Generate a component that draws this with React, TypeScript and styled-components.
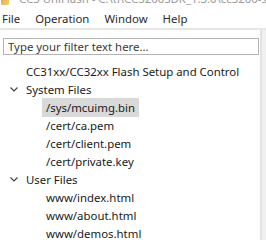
import React from "react";
import styled, { createGlobalStyle } from "styled-components";

const GlobalStyle = createGlobalStyle`
  html, body {
    margin: 0;
    padding: 0;
    background: #ffffff;
  }
  body {
    font-family: "Noto Sans", "Open Sans", sans-serif;
    font-size: 11.4px;
    color: #1a1a1a;
  }
`;

const Window = styled.div`
  width: 266px;
  height: 240px;
  overflow: hidden;
  display: flex;
  flex-direction: column;
  background: #ffffff;
`;

const TitleBar = styled.div`
  height: 5px;
  display: flex;
  align-items: flex-end;
  gap: 10px;
  padding-left: 1px;
  overflow: hidden;
  flex-shrink: 0;
`;

const TitleIcon = styled.div`
  width: 8px;
  height: 9px;
  flex-shrink: 0;
  background: linear-gradient(135deg, #e8a33a, #f3d27a);
  border-radius: 1px;
`;

const TitleText = styled.span`
  line-height: 12px;
  color: #9a9a9a;
  white-space: nowrap;
`;

const MenuBar = styled.div`
  height: 23px;
  box-sizing: border-box;
  padding: 3px 0 0 2px;
  display: flex;
  align-items: center;
  flex-shrink: 0;
`;

const MenuItem = styled.span`
  margin-right: 15px;
  color: #2b2b2b;
  white-space: nowrap;
`;

const Body = styled.div`
  flex: 1;
  display: flex;
  border-top: 2px solid #e6e6e6;
  min-height: 0;
`;

const Panel = styled.div`
  width: 262px;
  flex-shrink: 0;
  border-right: 2px solid #e2e2e2;
  padding-top: 8px;
  box-sizing: border-box;
  display: flex;
  flex-direction: column;
`;

const Gutter = styled.div`
  flex: 1;
  background: #f0f0f0;
`;

const FilterInput = styled.input`
  width: 256px;
  height: 20px;
  margin-left: 3px;
  box-sizing: border-box;
  border: 1px solid #b4b4b4;
  padding: 0 4px;
  font-family: inherit;
  font-size: 11.4px;
  outline: none;
  &::placeholder {
    color: #3a3a3a;
  }
`;

const Tree = styled.div`
  display: flex;
  flex-direction: column;
  padding-top: 7px;
`;

const Row = styled.div<{ $depth: number }>`
  height: 18px;
  display: flex;
  align-items: center;
  padding-left: ${(p) => 6 + p.$depth * 20}px;
  white-space: nowrap;
`;

const Toggle = styled.span`
  width: 16px;
  padding-left: 4px;
  box-sizing: border-box;
  display: flex;
  align-items: center;
  flex-shrink: 0;
`;

const Label = styled.span<{ $selected?: boolean }>`
  line-height: 15px;
  padding: 2px 4px 2px 4px;
  background: ${(p) => (p.$selected ? "#d9d9d9" : "transparent")};
  color: #1a1a1a;
`;

const Chevron = () => (
  <svg width="8" height="5" viewBox="0 0 8 5">
    <polyline
      points="0.5,0.5 4,4 7.5,0.5"
      fill="none"
      stroke="#444"
      strokeWidth="1.2"
    />
  </svg>
);

type Node = { label: string; depth: number; group?: boolean; selected?: boolean };

const nodes: Node[] = [
  { label: "CC31xx/CC32xx Flash Setup and Control", depth: 0 },
  { label: "System Files", depth: 0, group: true },
  { label: "/sys/mcuimg.bin", depth: 1, selected: true },
  { label: "/cert/ca.pem", depth: 1 },
  { label: "/cert/client.pem", depth: 1 },
  { label: "/cert/private.key", depth: 1 },
  { label: "User Files", depth: 0, group: true },
  { label: "www/index.html", depth: 1 },
  { label: "www/about.html", depth: 1 },
  { label: "www/demos.html", depth: 1 },
];

export default function App() {
  return (
    <Window>
      <GlobalStyle />
      <TitleBar>
        <TitleIcon />
        <TitleText>CC3 UniFlash - C:\ti\CC3200SDK_1.3.0\cc3200-sdk</TitleText>
      </TitleBar>
      <MenuBar>
        <MenuItem>File</MenuItem>
        <MenuItem>Operation</MenuItem>
        <MenuItem>Window</MenuItem>
        <MenuItem>Help</MenuItem>
      </MenuBar>
      <Body>
        <Panel>
          <FilterInput placeholder="Type your filter text here..." />
          <Tree>
            {nodes.map((n) => (
              <Row key={n.label} $depth={n.depth}>
                <Toggle>{n.group ? <Chevron /> : null}</Toggle>
                <Label $selected={n.selected}>{n.label}</Label>
              </Row>
            ))}
          </Tree>
        </Panel>
        <Gutter />
      </Body>
    </Window>
  );
}
